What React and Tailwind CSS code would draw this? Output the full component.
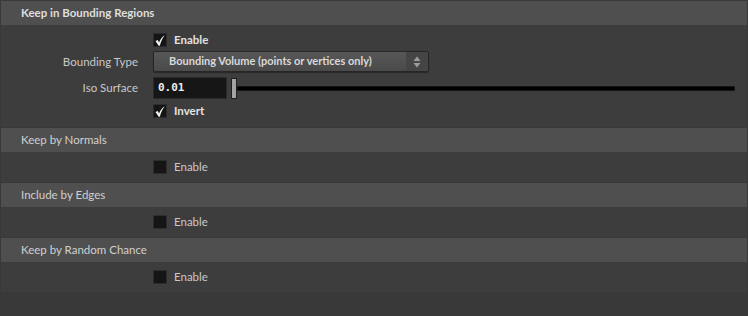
import React from 'react';

const FONT = { fontFamily: 'Lato, "Open Sans", sans-serif' };

function Check({ checked }) {
  return (
    <div className="w-[14px] h-[14px] bg-[#151515] border border-[#2c2c2c] flex items-center justify-center">
      {checked && (
        <svg width="10" height="11" viewBox="0 0 10 11">
          <path d="M0.5 6 L2.8 5 L4 7.6 C5.3 4.3 7.2 1.8 9.8 0.3 C7.8 2.8 6 6.2 4.8 10.8 L3.6 10.8 Z" fill="#f2f2f2" />
        </svg>
      )}
    </div>
  );
}

function CheckRow({ checked, label }) {
  return (
    <div className="flex items-center gap-[7px] h-[14px]">
      <Check checked={checked} />
      <span className={checked ? 'text-[11.5px] font-bold text-[#e2e2e2]' : 'text-[11.5px] text-[#c9c9c9]'}>{label}</span>
    </div>
  );
}

function Header({ title, bold }) {
  return (
    <div className="h-[24px] bg-[#4f4f4f] flex items-center pl-[20px]">
      <span className={bold ? 'text-[11.5px] font-bold text-[#dedede]' : 'text-[11.5px] text-[#cfcfcf]'}>{title}</span>
    </div>
  );
}

function Collapsed({ title }) {
  return (
    <div className="flex flex-col">
      <Header title={title} />
      <div className="bg-[#3d3d3d] h-[30px] pl-[152px] pt-[8px]">
        <CheckRow checked={false} label="Enable" />
      </div>
    </div>
  );
}

export default function App() {
  return (
    <div className="w-[748px] h-[316px] bg-[#393939] pt-[1px] px-[1px] flex flex-col gap-[1px] overflow-hidden" style={FONT}>
      <div className="flex flex-col">
        <Header title="Keep in Bounding Regions" bold />
        <div className="bg-[#3d3d3d] pt-[8px] pb-[9px] grid grid-cols-[137px_1fr] gap-x-[15px]">
          <div />
          <CheckRow checked label="Enable" />

          <div className="mt-[4px] h-[21px] flex items-center justify-end text-[11.5px] text-[#c9c9c9]">Bounding Type</div>
          <div className="mt-[4px] h-[21px] w-[276px] flex border border-[#262626] rounded-[2px] bg-gradient-to-b from-[#575757] to-[#4a4a4a] shadow-[0_1px_1px_rgba(0,0,0,0.35)]">
            <div className="flex-1 flex items-center pl-[15px] text-[11px] font-bold text-[#d9d9d9]">Bounding Volume (points or vertices only)</div>
            <div className="w-[22px] bg-[#454545] flex items-center justify-center">
              <svg width="8" height="12" viewBox="0 0 8 12">
                <path d="M4 0.5 L7.5 5 L0.5 5 Z" fill="#9c9c9c" />
                <path d="M4 11.5 L7.5 7 L0.5 7 Z" fill="#9c9c9c" />
              </svg>
            </div>
          </div>

          <div className="mt-[5px] h-[22px] flex items-center justify-end text-[11.5px] text-[#c9c9c9]">Iso Surface</div>
          <div className="mt-[5px] h-[22px] flex items-center">
            <div className="w-[74px] h-[22px] bg-[#161616] border border-[#2a2a2a] flex items-center pl-[4px] text-[11px] font-bold text-[#ececec]" style={{ fontFamily: '"DejaVu Sans Mono", monospace' }}>0.01</div>
            <div className="ml-[4px] w-[6px] h-[21px] bg-[#a4a4a4] border border-[#202020]" />
            <div className="flex-1 mr-[12px] h-[5px] bg-black border border-[#151515] rounded-r-[1px]" />
          </div>

          <div />
          <div className="mt-[5px]">
            <CheckRow checked label="Invert" />
          </div>
        </div>
      </div>
      <Collapsed title="Keep by Normals" />
      <Collapsed title="Include by Edges" />
      <Collapsed title="Keep by Random Chance" />
    </div>
  );
}
